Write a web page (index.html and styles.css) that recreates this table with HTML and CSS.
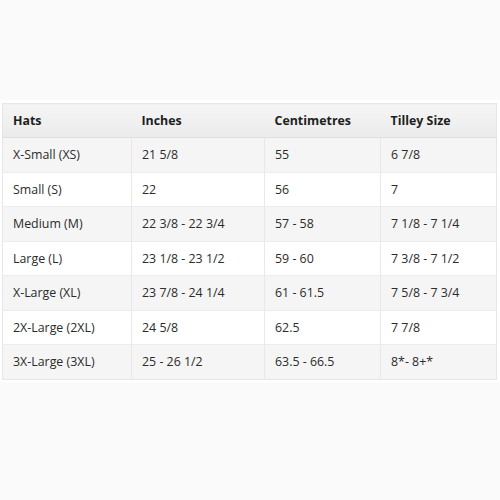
FILE: index.html
```html
<!DOCTYPE html>
<html>
<head>
<meta charset="utf-8">
<link rel="stylesheet" href="styles.css">
</head>
<body>
<div class="wrap">
<table class="sizes">
<colgroup><col class="c1"><col class="c2"><col class="c3"><col class="c4"></colgroup>
<thead>
<tr><th>Hats</th><th>Inches</th><th>Centimetres</th><th>Tilley Size</th></tr>
</thead>
<tbody>
<tr><td>X-Small (XS)</td><td>21 5/8</td><td>55</td><td>6 7/8</td></tr>
<tr><td>Small (S)</td><td>22</td><td>56</td><td>7</td></tr>
<tr><td>Medium (M)</td><td>22 3/8 - 22 3/4</td><td>57 - 58</td><td>7 1/8 - 7 1/4</td></tr>
<tr><td>Large (L)</td><td>23 1/8 - 23 1/2</td><td>59 - 60</td><td>7 3/8 - 7 1/2</td></tr>
<tr><td>X-Large (XL)</td><td>23 7/8 - 24 1/4</td><td>61 - 61.5</td><td>7 5/8 - 7 3/4</td></tr>
<tr><td>2X-Large (2XL)</td><td>24 5/8</td><td>62.5</td><td>7 7/8</td></tr>
<tr><td>3X-Large (3XL)</td><td>25 - 26 1/2</td><td>63.5 - 66.5</td><td>8*- 8+*</td></tr>
</tbody>
</table>
</div>
</body>
</html>
```
FILE: styles.css
```css
html, body {
  margin: 0;
  padding: 0;
  background: #fafafa;
}
body {
  font-family: "Open Sans", "Liberation Sans", sans-serif;
  color: #2b2b2b;
}
.wrap {
  margin-top: 100px;
  background: #fff;
  padding: 3px 3px 2px 2px;
}
.sizes {
  width: 100%;
  border-collapse: collapse;
  border: 1px solid #e6e6e6;
  font-size: 12.4px;
}
.c1 { width: 129px; }
.c2 { width: 133px; }
.c3 { width: 116px; }
.sizes th, .sizes td {
  text-align: left;
  padding: 0 10px;
  height: 33.5px;
  border-left: 1px solid #e8e8e8;
}
.sizes th {
  font-weight: 700;
  color: #1e1e1e;
  height: 33px;
  background: linear-gradient(#f5f5f5, #ebebeb);
  border-left: none;
  border-bottom: 1px solid #dedede;
}
.sizes td:first-child { border-left: none; }
.sizes tbody tr { border-top: 1px solid #ececec; }
.sizes tbody tr:first-child { border-top: none; }
.sizes tbody tr:nth-child(odd) td { background: #f5f5f5; }
.sizes tbody tr:nth-child(even) td { background: #fff; }
```
